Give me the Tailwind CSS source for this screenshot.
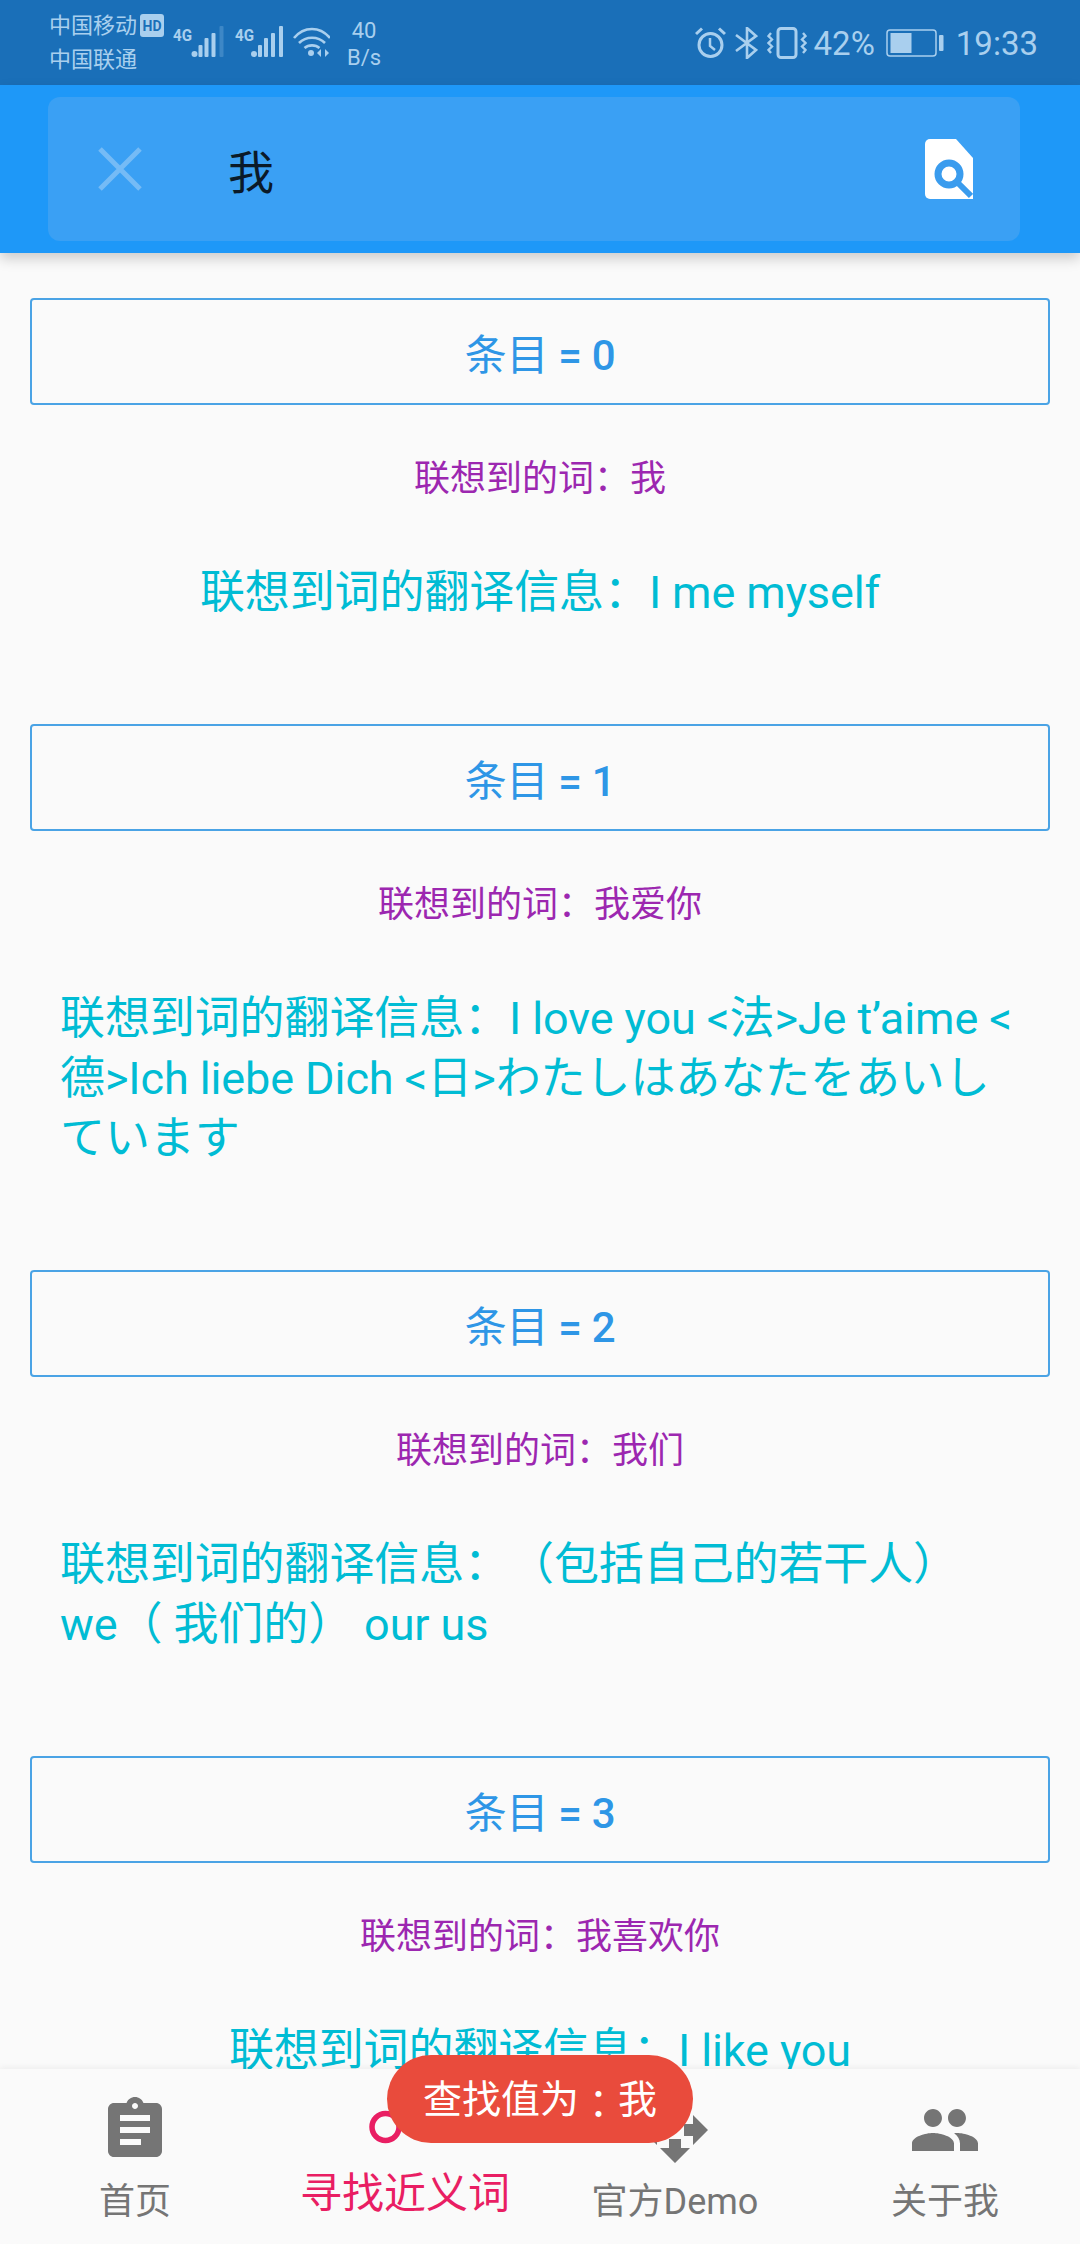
<!DOCTYPE html>
<html lang="zh-CN">
<head>
<meta charset="utf-8">
<script src="https://cdn.jsdelivr.net/npm/@tailwindcss/browser@4"></script>
</head>
<body class="m-0 bg-[#fafafa]">
<div class="relative flex h-[2244px] w-[1080px] flex-col overflow-hidden bg-[#fafafa] font-['Roboto','Noto_Sans_CJK_SC',sans-serif] [text-spacing-trim:space-all]">
  <!-- status bar -->
  <div class="flex h-[85px] shrink-0 items-center bg-[#1a6fb8] pl-[49px] pr-[42px] text-[#a9cfee]">
    <div class="flex w-[124px] flex-col text-[22px] leading-[34px]">
      <div class="flex items-center gap-[3px]"><span>中国移动</span><span class="flex h-[23px] w-[24px] items-center justify-center rounded-[3px] bg-[#a9cfee] text-[14px] font-bold leading-none text-[#1a6fb8]">HD</span></div>
      <span>中国联通</span>
    </div>
    <svg class="w-[62px]" height="85" viewBox="173 0 62 85" fill="#a9cfee"><text x="173" y="41" font-size="17" font-weight="700" textLength="19" lengthAdjust="spacingAndGlyphs">4G</text><circle cx="194.500" cy="54" r="3"/><rect x="198.500" y="45" width="4" height="12" rx="1"/><rect x="204.500" y="38" width="4" height="19" rx="1"/><rect x="211.500" y="33" width="4" height="24" rx="1"/><rect x="219.500" y="26" width="4" height="31" rx="1" opacity=".25"/></svg>
    <svg class="w-[58px]" height="85" viewBox="235 0 58 85" fill="#a9cfee"><text x="235" y="41" font-size="17" font-weight="700" textLength="19" lengthAdjust="spacingAndGlyphs">4G</text><circle cx="254" cy="54" r="3"/><rect x="258" y="45" width="4" height="12" rx="1"/><rect x="264" y="38" width="4" height="19" rx="1"/><rect x="271" y="33" width="4" height="24" rx="1"/><rect x="279" y="26" width="4" height="31" rx="1"/></svg>
    <svg class="w-[37px]" height="85" viewBox="293 0 37 85" fill="none" stroke="#a9cfee" stroke-width="2.600"><path d="M294 38C304 26 320 26 330 38"/><path d="M299 43c7-7 19-7 26 0"/><path d="M304.500 48c4-3.500 11-3.500 15 0"/><circle cx="311" cy="53" r="3" fill="#a9cfee" stroke="none"/><path d="M321 49l-4 4 4 4zM325 49l4 4-4 4z" fill="#a9cfee" stroke="none"/></svg>
    <div class="flex w-[68px] flex-col items-center pt-[2px] text-[22px] leading-[27px]"><span>40</span><span>B/s</span></div>
    <div class="flex flex-1 items-center justify-end pt-[1px] text-[33px]">
      <svg class="mr-[9px]" width="31" height="32" viewBox="0 0 31 32" fill="none" stroke="#a9cfee" stroke-width="3"><circle cx="15.500" cy="18" r="11.500"/><path d="M15 11v8l5 4" stroke-width="2.500"/><path d="M1 7l6-5.500M30 7l-6-5.500"/></svg>
      <svg class="mr-[9px]" width="23" height="32" viewBox="0 0 23 32" fill="none" stroke="#a9cfee" stroke-width="2.600"><path d="M1 8l20 15-9 8V1l9 8L1 24"/></svg>
      <svg class="mr-[7px]" width="40" height="32" viewBox="0 0 40 32" fill="none" stroke="#a9cfee" stroke-width="3"><rect x="11" y="1.500" width="18" height="29" rx="3"/><path d="M4 6L1.500 9 5 12.500 1.500 16 5 19.500 1.500 23 4 26M36 6l2.500 3L35 12.500l3.500 3.500-3.500 3.500 3.500 3.500-2.500 3" stroke-width="2.400"/></svg>
      <span class="mr-[11px] leading-none">42%</span>
      <svg class="mr-[12px]" width="58" height="28" viewBox="0 0 58 28" fill="none"><rect x="1" y="1" width="49" height="26" rx="3" stroke="#a9cfee" stroke-width="1.500"/><rect x="4.500" y="4" width="21" height="20" fill="#a9cfee"/><rect x="53" y="6" width="4.500" height="16" rx="1" fill="#a9cfee"/></svg>
      <span class="leading-none">19:33</span>
    </div>
  </div>
  <!-- app bar -->
  <div class="z-10 flex h-[168px] shrink-0 items-start bg-[#1e98f8] pl-[48px] pr-[60px] pt-[12px] shadow-[0_6px_12px_rgba(0,0,0,0.18)]">
    <div class="flex h-[144px] w-full items-center rounded-[12px] bg-[#3aa0f4]">
      <svg class="ml-[50px]" width="44" height="44" viewBox="0 0 44 44" stroke="#75bbf6" stroke-width="5"><path d="M2 2l40 40M42 2L2 42"/></svg>
      <span class="ml-[86px] flex-1 pt-[8px] text-[46px] leading-none text-[#0b1a28]">我</span>
      <svg class="mr-[47px]" width="48" height="60" viewBox="0 0 48 60"><path d="M5 0h26l17 19v41H5a5 5 0 0 1-5-5V5a5 5 0 0 1 5-5z" fill="#fff"/><circle cx="24" cy="35" r="11" fill="none" stroke="#3a9cee" stroke-width="7"/><path d="M32 43l14 14" stroke="#3a9cee" stroke-width="6"/></svg>
    </div>
  </div>
  <!-- list -->
  <div class="flex min-h-0 flex-1 flex-col overflow-hidden pt-[45px]">
    <section class="flex flex-col px-[30px]">
      <div class="flex h-[107px] shrink-0 items-center justify-center rounded-[4px] border-2 border-[#4aa3e5] pt-[8px] text-[42px] text-[#2e96e6]"><span class="tracking-[-0.3px]">条目 <b class="font-medium">= 0</b></span></div>
      <p class="mt-[50px] text-center text-[36px] leading-[48px] text-[#9c27b0]">联想到的词<span class="font-['Noto_Sans_CJK_TC'] leading-[0]">：</span>我</p>
      <p class="mt-[60px] px-[30px] text-center text-[45px] leading-[60px] tracking-[-0.1px] text-[#00bcd4]">联想到词的翻译信息<span class="font-['Noto_Sans_CJK_TC'] leading-[0]">：</span>I me myself</p>
      <div class="h-[101px]"></div>
    </section>
    <section class="flex flex-col px-[30px]">
      <div class="flex h-[107px] shrink-0 items-center justify-center rounded-[4px] border-2 border-[#4aa3e5] pt-[8px] text-[42px] text-[#2e96e6]"><span class="tracking-[-0.3px]">条目 <b class="font-medium">= 1</b></span></div>
      <p class="mt-[50px] text-center text-[36px] leading-[48px] text-[#9c27b0]">联想到的词<span class="font-['Noto_Sans_CJK_TC'] leading-[0]">：</span>我爱你</p>
      <p class="mt-[60px] px-[30px] text-[45px] leading-[60px] tracking-[-0.1px] text-[#00bcd4]">联想到词的翻译信息<span class="font-['Noto_Sans_CJK_TC'] leading-[0]">：</span>I love you &lt;法&gt;Je t’aime &lt;德&gt;Ich liebe Dich &lt;日&gt;わたしはあなたをあいしています</p>
      <div class="h-[101px]"></div>
    </section>
    <section class="flex flex-col px-[30px]">
      <div class="flex h-[107px] shrink-0 items-center justify-center rounded-[4px] border-2 border-[#4aa3e5] pt-[8px] text-[42px] text-[#2e96e6]"><span class="tracking-[-0.3px]">条目 <b class="font-medium">= 2</b></span></div>
      <p class="mt-[50px] text-center text-[36px] leading-[48px] text-[#9c27b0]">联想到的词<span class="font-['Noto_Sans_CJK_TC'] leading-[0]">：</span>我们</p>
      <p class="mt-[60px] px-[30px] text-[45px] leading-[60px] tracking-[-0.1px] text-[#00bcd4]">联想到词的翻译信息<span class="font-['Noto_Sans_CJK_TC'] leading-[0]">：</span>（包括自己的若干人） we（ 我们的） our us</p>
      <div class="h-[101px]"></div>
    </section>
    <section class="flex flex-col px-[30px]">
      <div class="flex h-[107px] shrink-0 items-center justify-center rounded-[4px] border-2 border-[#4aa3e5] pt-[8px] text-[42px] text-[#2e96e6]"><span class="tracking-[-0.3px]">条目 <b class="font-medium">= 3</b></span></div>
      <p class="mt-[50px] text-center text-[36px] leading-[48px] text-[#9c27b0]">联想到的词<span class="font-['Noto_Sans_CJK_TC'] leading-[0]">：</span>我喜欢你</p>
      <p class="mt-[60px] px-[30px] text-center text-[45px] leading-[60px] tracking-[-0.1px] text-[#00bcd4]">联想到词的翻译信息<span class="font-['Noto_Sans_CJK_TC'] leading-[0]">：</span>I like you</p>
    </section>
  </div>
  <!-- bottom nav -->
  <nav class="z-10 grid h-[175px] shrink-0 grid-cols-4 bg-[#fafafa] shadow-[0_-2px_6px_rgba(0,0,0,0.05)]">
    <div class="flex flex-col items-center pt-[25px] text-[#757575]">
      <svg width="72" height="72" viewBox="0 0 24 24" fill="currentColor"><path d="M19 3h-4.180C14.400 1.840 13.300 1 12 1c-1.300 0-2.400.84-2.820 2H5c-1.100 0-2 .9-2 2v14c0 1.100.9 2 2 2h14c1.100 0 2-.9 2-2V5c0-1.100-.9-2-2-2zm-7 0c.55 0 1 .45 1 1s-.45 1-1 1-1-.45-1-1 .45-1 1-1zm2 14H7v-2h7v2zm3-4H7v-2h10v2zm0-4H7V7h10v2z"/></svg>
      <span class="mt-[11px] text-[36px] leading-[50px]">首页</span>
    </div>
    <div class="flex flex-col items-center pt-[25px] text-[#e91e63]">
      <svg width="72" height="72" viewBox="0 0 72 72" fill="none" stroke="currentColor" stroke-width="5.500"><circle cx="16.500" cy="33" r="13.500"/><path d="M26 23L48 2"/></svg>
      <span class="mt-[1px] text-[42px] leading-[54px]">寻找近义词</span>
    </div>
    <div class="flex flex-col items-center pt-[25px] text-[#757575]">
      <svg width="72" height="72" viewBox="0 0 24 24" fill="currentColor"><path d="M10 9h4V6h3l-5-5-5 5h3v3zm-1 1H6V7l-5 5 5 5v-3h3v-4zm14 2l-5-5v3h-3v4h3v3l5-5zm-9 3h-4v3H7l5 5 5-5h-3v-3z"/></svg>
      <span class="mt-[11px] text-[36px] leading-[50px]">官方Demo</span>
    </div>
    <div class="flex flex-col items-center pt-[25px] text-[#757575]">
      <svg width="72" height="72" viewBox="0 0 24 24" fill="currentColor"><path d="M16 11c1.660 0 2.990-1.340 2.990-3S17.660 5 16 5c-1.660 0-3 1.340-3 3s1.340 3 3 3zm-8 0c1.660 0 2.990-1.340 2.990-3S9.660 5 8 5C6.340 5 5 6.340 5 8s1.340 3 3 3zm0 2c-2.330 0-7 1.170-7 3.500V19h14v-2.500c0-2.330-4.670-3.500-7-3.500zm8 0c-.29 0-.62.02-.97.05 1.160.84 1.970 1.970 1.970 3.450V19h6v-2.500c0-2.330-4.670-3.500-7-3.500z"/></svg>
      <span class="mt-[11px] text-[36px] leading-[50px]">关于我</span>
    </div>
  </nav>
  <!-- toast -->
  <div class="absolute left-[387px] top-[2055px] z-20 flex h-[88px] w-[306px] items-center justify-center rounded-full bg-[#e94b3c] pt-[3px] text-[39px] text-white">查找值为<span class="font-['Noto_Sans_CJK_TC'] leading-[0]">：</span>我</div>
</div>
</body>
</html>
